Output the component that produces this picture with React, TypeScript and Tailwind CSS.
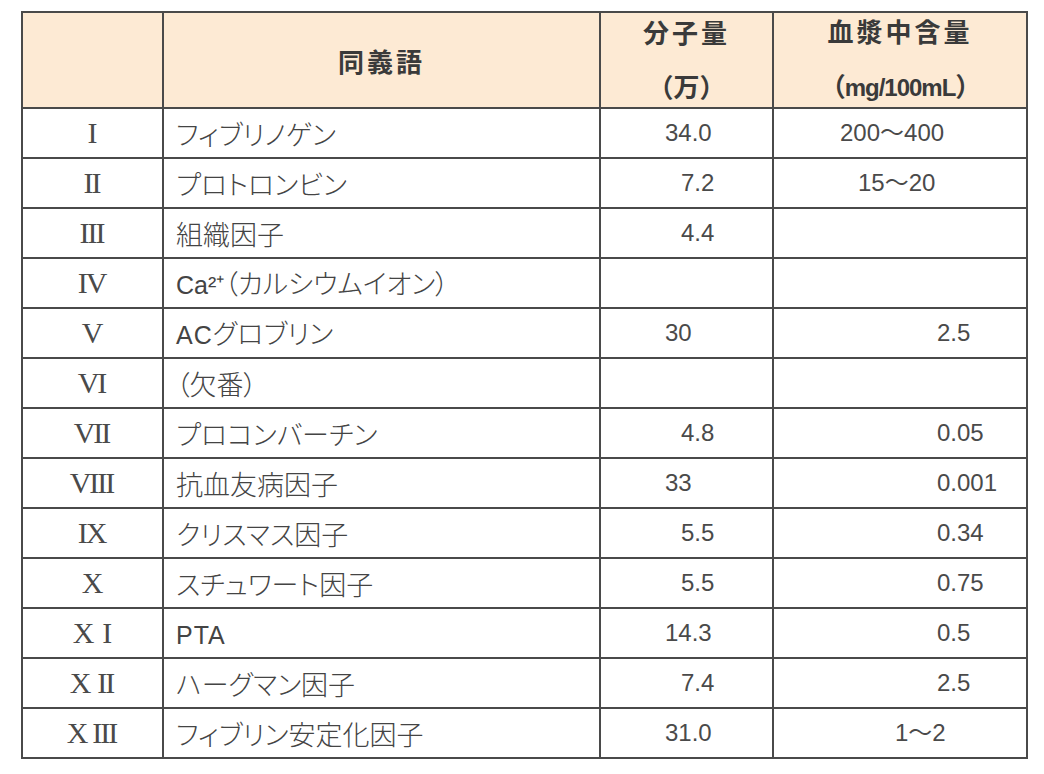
import React from "react";

type Row = {
  roman: React.ReactNode;
  name: React.ReactNode;
  mw: string;
  mwPad: string;
  amt: string;
  amtPad: string;
};

const latin = "font-['Liberation_Sans',sans-serif] text-[25px]";

const rows: Row[] = [
  { roman: "I", name: "フィブリノゲン", mw: "34.0", mwPad: "pl-[64px]", amt: "200～400", amtPad: "pl-[66px]" },
  { roman: "II", name: "プロトロンビン", mw: "7.2", mwPad: "pl-[80px]", amt: "15～20", amtPad: "pl-[84px]" },
  { roman: "III", name: "組織因子", mw: "4.4", mwPad: "pl-[80px]", amt: "", amtPad: "" },
  {
    roman: "IV",
    name: (
      <>
        <span className={latin}>Ca²⁺</span>（カルシウムイオン）
      </>
    ),
    mw: "",
    mwPad: "",
    amt: "",
    amtPad: "",
  },
  {
    roman: "V",
    name: (
      <>
        <span className={latin + " tracking-[1px]"}>AC</span>グロブリン
      </>
    ),
    mw: "30",
    mwPad: "pl-[64px]",
    amt: "2.5",
    amtPad: "pl-[163px]",
  },
  { roman: "VI", name: "（欠番）", mw: "", mwPad: "", amt: "", amtPad: "" },
  { roman: "VII", name: "プロコンバーチン", mw: "4.8", mwPad: "pl-[80px]", amt: "0.05", amtPad: "pl-[163px]" },
  { roman: "VIII", name: "抗血友病因子", mw: "33", mwPad: "pl-[64px]", amt: "0.001", amtPad: "pl-[163px]" },
  { roman: "IX", name: "クリスマス因子", mw: "5.5", mwPad: "pl-[80px]", amt: "0.34", amtPad: "pl-[163px]" },
  { roman: "X", name: "スチュワート因子", mw: "5.5", mwPad: "pl-[80px]", amt: "0.75", amtPad: "pl-[163px]" },
  {
    roman: (
      <>
        X<span className="ml-[10px]">I</span>
      </>
    ),
    name: <span className={latin + " tracking-[1px]"}>PTA</span>,
    mw: "14.3",
    mwPad: "pl-[64px]",
    amt: "0.5",
    amtPad: "pl-[163px]",
  },
  {
    roman: (
      <>
        X<span className="ml-[8px]">II</span>
      </>
    ),
    name: "ハーグマン因子",
    mw: "7.4",
    mwPad: "pl-[80px]",
    amt: "2.5",
    amtPad: "pl-[163px]",
  },
  {
    roman: (
      <>
        X<span className="ml-[6px]">III</span>
      </>
    ),
    name: "フィブリン安定化因子",
    mw: "31.0",
    mwPad: "pl-[64px]",
    amt: "1～2",
    amtPad: "pl-[121px]",
  },
];

const head = "bg-[#fdead4] flex flex-col items-center justify-center font-bold text-[#3a3a3a] text-[26px] tracking-[3px] font-['Noto_Sans_CJK_JP',sans-serif]";

export default function App() {
  return (
    <div className="w-[1044px] h-[774px] bg-white pt-[11px] pl-[21px]">
      <div className="w-[1007px] grid grid-cols-[139px_435px_171px_252px] grid-rows-[94px_repeat(13,48px)] gap-[2px] p-[2px] bg-[#4a4a4a]">
        <div className="bg-[#fdead4]" />
        <div className={head}>
          <span className="leading-[30px] mt-[2px]">同義語</span>
        </div>
        <div className={head + " gap-[24px]"}>
          <span className="leading-[30px] -mt-[2px]">分子量</span>
          <span className="leading-[30px] tracking-[0px]">（万）</span>
        </div>
        <div className={head + " gap-[24px]"}>
          <span className="leading-[30px] -mt-[2px]">血漿中含量</span>
          <span className="leading-[30px] tracking-[-1px]">
            （<span className="font-['Liberation_Sans',sans-serif] text-[24px] tracking-[-1px]">mg/100mL</span>）
          </span>
        </div>
        {rows.map((r, i) => (
          <React.Fragment key={i}>
            <div className="bg-white flex items-center justify-center font-['Liberation_Serif',serif] text-[30px] tracking-[-2px] text-[#4a4a4a] leading-none">
              <span className="pr-[2px]">{r.roman}</span>
            </div>
            <div className="bg-white flex items-center pl-[12px] font-['Noto_Sans_CJK_JP',sans-serif] font-light text-[27px] text-[#444] leading-none [font-feature-settings:'palt']">
              <span>{r.name}</span>
            </div>
            <div className={"bg-white flex items-center font-['Liberation_Sans','Noto_Sans_CJK_JP',sans-serif] text-[24px] text-[#4a4a4a] leading-none " + r.mwPad}>
              <span>{r.mw}</span>
            </div>
            <div className={"bg-white flex items-center font-['Liberation_Sans','Noto_Sans_CJK_JP',sans-serif] text-[24px] text-[#4a4a4a] leading-none " + r.amtPad}>
              <span>{r.amt}</span>
            </div>
          </React.Fragment>
        ))}
      </div>
    </div>
  );
}
